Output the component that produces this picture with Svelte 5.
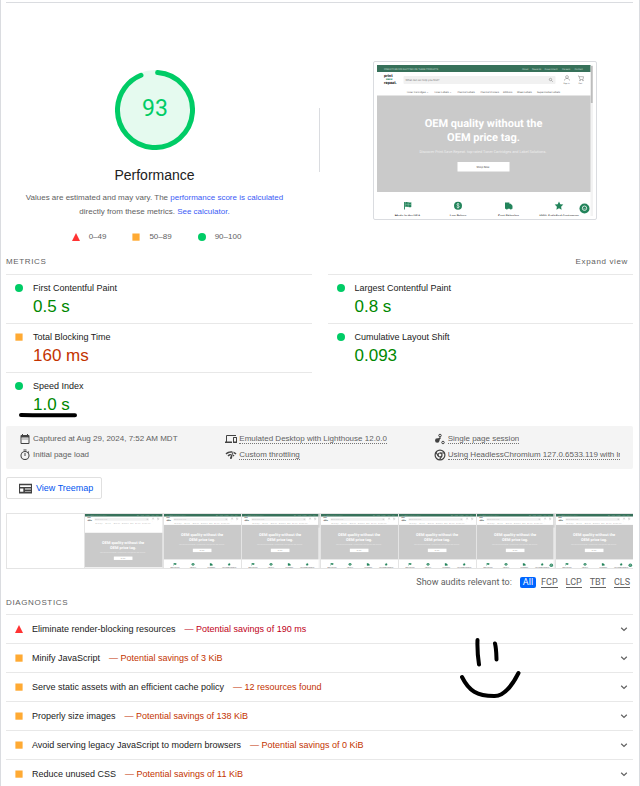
<script>
  const columns = [
    [
      { title: 'First Contentful Paint', value: '0.5 s', rating: 'pass' },
      { title: 'Total Blocking Time', value: '160 ms', rating: 'average' },
      { title: 'Speed Index', value: '1.0 s', rating: 'pass', marked: true }
    ],
    [
      { title: 'Largest Contentful Paint', value: '0.8 s', rating: 'pass' },
      { title: 'Cumulative Layout Shift', value: '0.093', rating: 'pass' }
    ]
  ];

  const legend = [
    { rating: 'fail', range: '0–49' },
    { rating: 'average', range: '50–89' },
    { rating: 'pass', range: '90–100' }
  ];

  const environment = [
    { icon: 'calendar', text: 'Captured at Aug 29, 2024, 7:52 AM MDT' },
    { icon: 'devices', text: 'Emulated Desktop with Lighthouse 12.0.0', hint: true },
    { icon: 'session', text: 'Single page session', hint: true },
    { icon: 'timer', text: 'Initial page load' },
    { icon: 'network', text: 'Custom throttling', hint: true },
    { icon: 'chrome', text: 'Using HeadlessChromium 127.0.6533.119 with lr', hint: true }
  ];

  const frames = [
    { blank: true },
    { early: true },
    {},
    { scrollbar: true },
    {},
    {},
    { scrollbar: true, chat: true },
    { chat: true }
  ];

  const audits = [
    { title: 'Eliminate render-blocking resources', detail: 'Potential savings of 190 ms', rating: 'fail' },
    { title: 'Minify JavaScript', detail: 'Potential savings of 3 KiB', rating: 'average' },
    { title: 'Serve static assets with an efficient cache policy', detail: '12 resources found', rating: 'average' },
    { title: 'Properly size images', detail: 'Potential savings of 138 KiB', rating: 'average' },
    { title: 'Avoid serving legacy JavaScript to modern browsers', detail: 'Potential savings of 0 KiB', rating: 'average' },
    { title: 'Reduce unused CSS', detail: 'Potential savings of 11 KiB', rating: 'average' }
  ];

  const filters = ['All', 'FCP', 'LCP', 'TBT', 'CLS'];
  let selected = $state('All');
</script>

{#snippet mark(rating)}
  <svg class="mark" viewBox="0 0 8 8" aria-hidden="true">
    {#if rating === 'pass'}
      <circle cx="4" cy="4" r="4" fill="#0c6" />
    {:else if rating === 'average'}
      <rect x="0.4" y="0.5" width="7.2" height="7.2" fill="#fa3" />
    {:else}
      <path d="M4 0l4 8H0z" fill="#f33" />
    {/if}
  </svg>
{/snippet}

{#snippet storefront(frame)}
  <svg class="shot" viewBox="0 0 216 151" preserveAspectRatio="none" aria-hidden="true">
    <rect width="216" height="151" fill="#fff" />
    {#if !frame.blank}
      <rect width="216" height="7" fill="#37715a" />
      <g font-size="2.4" fill="#c4d8cf">
        <text x="7" y="4.5">FREE STANDARD SHIPPING ON THESE PRODUCTS</text>
        <text x="145" y="4.5">About</text>
        <text x="155" y="4.5">Rewards</text>
        <text x="167.5" y="4.5">Government</text>
        <text x="185" y="4.5">Careers</text>
        <text x="197.500" y="4.5">Contact</text>
      </g>
      <g font-size="4" font-weight="900">
        <text x="7" y="12.400" fill="#333">print</text>
        <text x="9" y="15.400" font-size="3" fill="#23845b">save</text>
        <text x="7" y="19" fill="#333">repeat.</text>
      </g>
      <rect x="26.5" y="11" width="152" height="8" rx="1" fill="#f1f1f1" />
      <text x="28.500" y="16" font-size="2.800" fill="#777">What can we help you find?</text>
      <g fill="none" stroke="#777" stroke-width="0.5">
        <circle cx="173.5" cy="14.5" r="1.2" />
        <path d="M174.4 15.4l1.4 1.4" />
        <circle cx="190" cy="12" r="1.4" />
        <path d="M187.5 15.5c0-2.8 5-2.8 5 0M201 11h1l1 3.5h3l.5-2.8h-4.2" />
        <circle cx="203" cy="15.5" r="0.4" />
        <circle cx="206" cy="15.5" r="0.4" />
      </g>
      <g font-size="2.600" fill="#555">
        <text x="186.5" y="18.5" font-size="2">Sign in</text>
        <text x="201.500" y="18.5" font-size="2">Cart</text>
        <text x="29.5" y="27.5">Toner Cartridges ⌄</text>
        <text x="57" y="27.5">Toner Labels ⌄</text>
        <text x="80" y="27.5">Thermal Labels</text>
        <text x="103" y="27.5">Thermal Printers</text>
        <text x="126" y="27.5">Ribbons</text>
        <text x="140" y="27.5">Sheet Labels</text>
        <text x="160" y="27.5">Supermarket Labels</text>
      </g>
      <g transform={frame.early ? 'translate(0 22)' : 'translate(0 0)'}>
        <rect y="30.5" width="216" height="96.5" fill="#cacaca" />
        <g fill="#fff" text-anchor="middle">
          <text x="106.5" y="62" font-size="11" font-weight="700">OEM quality without the</text>
          <text x="106.5" y="76" font-size="11" font-weight="700">OEM price tag.</text>
          <text x="106" y="88" font-size="3.800" fill="#eee">Discover Print.Save.Repeat. top-rated Toner Cartridges and Label Solutions.</text>
          <rect x="80.5" y="97" width="52" height="9.5" />
          <text x="106" y="103" font-size="2.800" fill="#444">Shop Now</text>
        </g>
      </g>
      {#if !frame.early}
        <g fill="#23845b">
          <path d="M27 137h.9v7.5H27zM28.2 137.3c2-.9 3.6.8 6.1-.1v4.8c-2.5.9-4.1-.8-6.1.1z" />
          <circle cx="81" cy="140.7" r="4" />
          <path d="M128 137.5h4.400v1.300h1.400l1.700 1.900v3H128z" />
          <circle cx="129.8" cy="143.5" r="1.1" />
          <circle cx="133.8" cy="143.5" r="1.1" />
          <path d="M182 136.5l1.300 2.700 3 .4-2.200 2.100.5 3-2.600-1.400-2.600 1.400.5-3-2.200-2.100 3-.4z" />
        </g>
        <path d="M28.5 139.5c2-.8 3.6.6 5.6 0M31.2 137.5v4.5" fill="none" stroke="#9ccbb5" stroke-width="0.5" />
        <path d="M82.3 139.3c-.8-1-2.6-.6-2.4.4.2 1.200 2.400.7 2.400 2 0 1-2 1.200-2.700.2M81 138v5.500" fill="none" stroke="#fff" stroke-width="0.6" />
        <g font-size="3.400" font-weight="700" fill="#444" text-anchor="middle">
          <text x="30.5" y="151.5">Made in the USA</text>
          <text x="81" y="151.5">Low Prices</text>
          <text x="131.5" y="151.5">Fast Shipping</text>
          <text x="182" y="151.5">100% Satisfied Customers</text>
        </g>
      {/if}
      {#if frame.chat}
        <circle cx="207.5" cy="143.5" r="5" fill="#23845b" />
        <circle cx="207.5" cy="143.2" r="2.200" fill="none" stroke="#fff" stroke-width="0.8" />
        <path d="M206.5 143.3q1 1 2 0" fill="none" stroke="#fff" stroke-width="0.5" />
      {/if}
      {#if frame.scrollbar}
        <rect x="213.5" width="2.5" height="151" fill="#f3f3f3" />
        <rect x="213.8" y="1" width="1.9" height="37" fill="#bdbdbd" />
      {/if}
    {/if}
  </svg>
{/snippet}

{#snippet icon(name)}
  <svg class="icon" viewBox="0 0 24 24" aria-hidden="true">
    {#if name === 'calendar'}
      <path d="M7 11h2v2H7zm4 0h2v2h-2zm4 0h2v2h-2zm4-7h-1V2h-2v2H8V2H6v2H5a2 2 0 0 0-2 2v14a2 2 0 0 0 2 2h14a2 2 0 0 0 2-2V6a2 2 0 0 0-2-2zm0 16H5V9h14z" />
    {:else if name === 'devices'}
      <path d="M4 6h18V4H4a2 2 0 0 0-2 2v11H0v3h14v-3H4zm19 2h-6a1 1 0 0 0-1 1v10a1 1 0 0 0 1 1h6a1 1 0 0 0 1-1V9a1 1 0 0 0-1-1zm-1 9h-4v-7h4z" />
    {:else if name === 'session'}
      <circle cx="12" cy="5" r="2.5" fill="none" stroke="currentColor" stroke-width="2" />
      <circle cx="6.5" cy="15" r="4.5" />
      <circle cx="18" cy="19" r="2.5" fill="none" stroke="currentColor" stroke-width="2" />
      <path d="M12 8l2 2-4 5-3-3z" />
    {:else if name === 'timer'}
      <path d="M15 1H9v2h6zm-4 13h2V8h-2zm8.030-6.610l1.420-1.420a11 11 0 0 0-1.410-1.410l-1.420 1.420A9 9 0 1 0 19.030 7.390zM12 20a7 7 0 1 1 0-14 7 7 0 0 1 0 14z" />
    {:else if name === 'network'}
      <path d="M15.900 5c-.17 0-.32.09-.41.230l-.07.150-5.180 11.650c-.16.290-.26.610-.26.960 0 1.110.9 2.010 2.010 2.010.96 0 1.770-.68 1.960-1.590l.01-.03L16.400 5.500c0-.28-.22-.5-.5-.5zM1 9l2 2c2.880-2.880 6.790-4.080 10.530-3.620l1.190-2.680C9.890 3.840 4.740 5.270 1 9zm20 2l2-2a15.370 15.370 0 0 0-5.590-3.570l-.53 2.820c1.500.62 2.900 1.530 4.120 2.750zm-4 4l2-2c-.8-.8-1.700-1.420-2.660-1.890l-.55 2.920c.42.270.83.590 1.210.970zM5 13l2 2a7.100 7.100 0 0 1 4.030-2l1.280-2.880c-2.630-.08-5.300.870-7.310 2.880z" />
    {:else if name === 'chrome'}
      <g fill="none" stroke="currentColor" stroke-width="2.4">
        <circle cx="12" cy="12" r="9.8" />
        <circle cx="12" cy="12" r="4" />
        <path d="M12 8h9M8.5 14L4 6.5M15.5 14L11 21.500" />
      </g>
    {:else if name === 'treemap'}
      <path d="M0 3v18h24V3zm22 3v3H2V6zM2 18v-6h6v6zm9 0v-1h11v1zm11-4H11v-2h11z" />
    {/if}
  </svg>
{/snippet}

<main class="report">
  <header class="overview">
    <section class="score">
      <svg class="gauge" viewBox="0 0 80 80" role="img" aria-label="Performance score 93">
        <circle cx="40" cy="40" r="40" fill="#e5faef" />
        <circle class="arc" cx="40" cy="40" r="37.5" pathLength="360" />
        <text x="40" y="46" text-anchor="middle">93</text>
      </svg>
      <h1>Performance</h1>
      <p>
        Values are estimated and may vary. The <a href="#score">performance score is calculated</a>
        directly from these metrics. <a href="#calculator">See calculator.</a>
      </p>
      <ul class="legend">
        {#each legend as item}
          <li>{@render mark(item.rating)}<span>{item.range}</span></li>
        {/each}
      </ul>
    </section>
    <div class="divider"></div>
    <div class="final">
      {@render storefront({ scrollbar: true, chat: true })}
    </div>
  </header>

  <div class="section-title">
    <h2>METRICS</h2>
    <button type="button" class="expand">Expand view</button>
  </div>

  <section class="metrics">
    {#each columns as column}
      <div>
        {#each column as metric}
          <div class="metric">
            {@render mark(metric.rating)}
            <div class="reading">
              <h3>{metric.title}</h3>
              <strong class={metric.rating}>{metric.value}</strong>
            </div>
            {#if metric.marked}
              <svg class="underline" viewBox="0 0 60 6" aria-hidden="true">
                <path d="M3 3c18 .5 36 .2 54 .2" />
              </svg>
            {/if}
          </div>
        {/each}
      </div>
    {/each}
  </section>

  <ul class="environment">
    {#each environment as item}
      <li>{@render icon(item.icon)}<span class:hint={item.hint}>{item.text}</span></li>
    {/each}
  </ul>

  <button type="button" class="treemap">{@render icon('treemap')}View Treemap</button>

  <div class="filmstrip">
    {#each frames as frame}
      {@render storefront(frame)}
    {/each}
  </div>

  <div class="filters">
    <span>Show audits relevant to:</span>
    {#each filters as filter}
      <button
        type="button"
        class:active={selected === filter}
        aria-pressed={selected === filter}
        onclick={() => (selected = filter)}>{filter}</button>
    {/each}
  </div>

  <div class="section-title diagnostics">
    <h2>DIAGNOSTICS</h2>
  </div>

  <section class="audits">
    {#each audits as audit}
      <details>
        <summary>
          {@render mark(audit.rating)}
          <span>{audit.title}</span>
          <span class={audit.rating}>— {audit.detail}</span>
          <svg class="chevron" viewBox="0 0 8 8" aria-hidden="true"><path d="M1.200 2.800L4 5.500l2.800-2.700" /></svg>
        </summary>
      </details>
    {/each}
    <svg class="smile" viewBox="0 0 64 64" aria-hidden="true">
      <path d="M19.5 4c-.3 8 .2 16 1.5 24.500M37 7.500c1.300 5 1.300 10 1.500 16M4 41c7 14 15 19 32 19 9 .5 18-10 24.500-23" />
    </svg>
  </section>
</main>

<style>
  :global(body) {
    background: #fff;
  }

  .report {
    min-height: 100vh;
    box-sizing: border-box;
    padding: 2px 6px 0 5px;
    border: solid #dadce0;
    border-width: 0 1px;
    font: 9px/14px 'Liberation Sans', Arial, sans-serif;
    color: #212121;
  }

  h1,
  h2,
  h3,
  p,
  ul {
    margin: 0;
    padding: 0;
    font-weight: 400;
    list-style: none;
  }

  button {
    font: inherit;
    letter-spacing: inherit;
    color: inherit;
    background: none;
    border: 0;
    padding: 0;
    cursor: pointer;
  }

  .mark {
    width: 8px;
    height: 8px;
    flex: none;
  }

  .icon {
    width: 12px;
    height: 12px;
    flex: none;
    fill: currentColor;
    color: #424242;
  }

  .overview {
    display: grid;
    grid-template-columns: 1fr 1px 1fr;
    gap: 16px;
    border-top: 1px solid #dadce0;
    padding-top: 58px;
  }

  .score {
    display: flex;
    flex-direction: column;
    align-items: center;
    padding-top: 9px;
    font-size: 8px;
    color: #616161;
    text-align: center;
  }

  .gauge {
    width: 80px;
    height: 80px;
  }

  .gauge text {
    font: 23px Roboto, sans-serif;
    fill: #0c6;
  }

  .arc {
    fill: none;
    stroke: #0c6;
    stroke-width: 5;
    stroke-linecap: round;
    stroke-dasharray: 334 360;
    transform: rotate(-86deg);
    transform-origin: center;
  }

  h1 {
    margin: 15px 0 6px;
    font-size: 14px;
    line-height: 20px;
    color: #212121;
  }

  .score p {
    max-width: 270px;
  }

  .score a {
    color: #3b5bf5;
    text-decoration: none;
  }

  .legend {
    display: flex;
    gap: 26px;
    margin-top: 11px;
    padding-left: 4px;
  }

  .legend li {
    display: flex;
    align-items: center;
    gap: 9px;
  }

  .divider {
    height: 64px;
    margin-top: 47px;
    background: #dadce0;
  }

  .final {
    justify-self: center;
    align-self: start;
    display: flex;
    padding: 3px;
    width: 216px;
    height: 151px;
    border: 1px solid #dadce0;
    border-radius: 2px;
  }

  .shot {
    display: block;
    width: 100%;
    height: 100%;
    font-family: Roboto, sans-serif;
    text-rendering: geometricPrecision;
  }

  .section-title {
    display: flex;
    justify-content: space-between;
    padding: 11px 5px 5px 0;
    font-size: 8px;
    letter-spacing: 0.08em;
    color: #616161;
  }

  .section-title h2 {
    font-size: 8px;
  }

  .metrics {
    display: grid;
    grid-template-columns: 1fr 1fr;
    gap: 16px;
  }

  .metric {
    position: relative;
    display: flex;
    gap: 10px;
    height: 48px;
    padding-left: 9px;
    border-top: 1px solid #e8e8e8;
  }

  .metric .mark {
    margin-top: 9px;
  }

  .reading {
    padding-top: 6px;
  }

  .metric h3 {
    font-size: 9px;
  }

  .metric strong {
    display: block;
    font-size: 17px;
    line-height: 24px;
    font-weight: 400;
  }

  .pass {
    color: #080;
  }

  .average {
    color: #c33300;
  }

  .fail {
    color: #c00020;
  }

  .underline {
    position: absolute;
    left: 12px;
    bottom: 3px;
    width: 60px;
    height: 6px;
  }

  .underline path,
  .smile path {
    fill: none;
    stroke: #000;
    stroke-width: 4;
    stroke-linecap: round;
    stroke-linejoin: round;
  }

  .environment {
    display: grid;
    grid-template-columns: 206fr 208fr 186fr;
    row-gap: 2px;
    margin-top: 5px;
    padding: 6px 13px 7px;
    background: #f4f4f4;
    border-radius: 2px;
    font-size: 8px;
    color: #616161;
  }

  .environment li {
    display: flex;
    align-items: center;
    gap: 2px;
    min-width: 0;
    height: 14px;
    line-height: 9px;
    white-space: nowrap;
  }

  .environment span {
    overflow: hidden;
    border-bottom: 1px solid transparent;
  }

  .environment .hint {
    border-bottom: 1px dotted #757575;
  }

  .treemap {
    display: flex;
    align-items: center;
    gap: 4px;
    height: 22px;
    margin-top: 8px;
    padding: 0 8px 0 12px;
    border: 1px solid #e0e0e0;
    border-radius: 2px;
    color: #0055f0;
  }

  .treemap .icon {
    width: 13px;
    height: 13px;
  }

  .filmstrip {
    display: grid;
    grid-template-columns: repeat(8, 1fr);
    gap: 1px;
    height: 54px;
    margin-top: 14px;
    border: 1px solid #e4e4e4;
    border-right: 0;
    background: #e4e4e4;
  }

  .filmstrip .shot {
    height: 54px;
  }

  .filters {
    display: flex;
    align-items: center;
    justify-content: flex-end;
    gap: 8px;
    padding: 7px 3px 0 0;
    font: 9px/12px Roboto, sans-serif;
    color: #616161;
  }

  .filters button {
    height: 11px;
    line-height: 10px;
    border-bottom: 1px solid #616161;
  }

  .filters .active {
    margin-right: -3px;
    padding: 0 3px;
    border: 0;
    border-radius: 2px;
    background: #06f;
    color: #fff;
  }

  .diagnostics {
    padding: 8px 0 4px;
  }

  .audits {
    position: relative;
  }

  .audits summary {
    display: flex;
    align-items: center;
    gap: 9px;
    height: 28px;
    padding: 0 5px 0 9px;
    border-top: 1px solid #e8e8e8;
    cursor: pointer;
  }

  .chevron {
    width: 8px;
    height: 8px;
    margin-left: auto;
    fill: none;
    stroke: #616161;
    stroke-width: 1.2;
  }

  .smile {
    position: absolute;
    top: 22px;
    right: 111px;
    width: 64px;
    height: 64px;
  }
</style>
